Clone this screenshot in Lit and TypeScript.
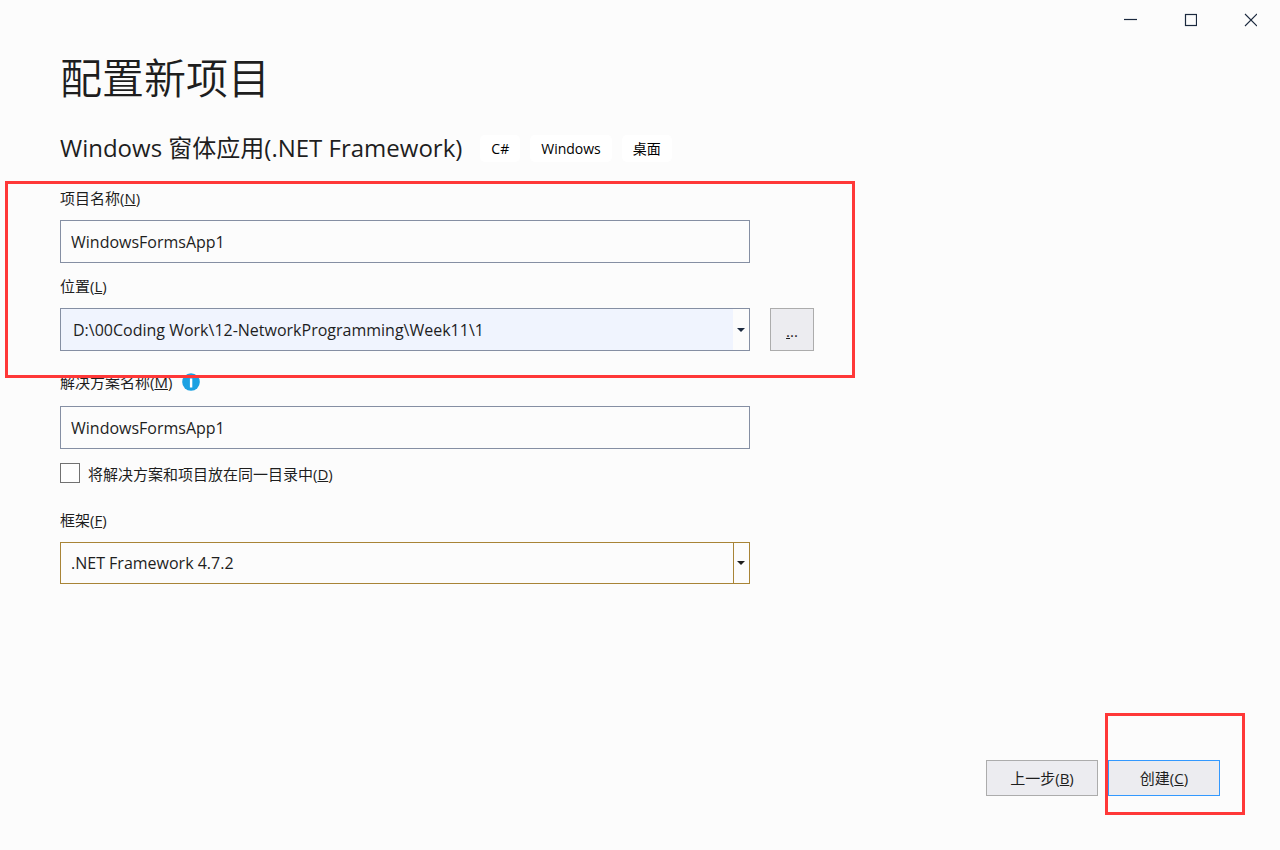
import { LitElement, html, css, svg } from "lit";
import { customElement, state } from "lit/decorators.js";

const caret = svg`<svg class="caret" viewBox="0 0 8 4" width="8" height="4" aria-hidden="true"><path d="M0 0H8L4 4Z" fill="currentColor"/></svg>`;

@customElement("app-root")
export class AppRoot extends LitElement {
  static styles = css`
    :host {
      display: flex;
      flex-direction: column;
      box-sizing: border-box;
      min-height: 100vh;
      background: #fcfcfc;
      color: #1e1e1e;
      font-family: "Open Sans", "Noto Sans CJK SC", sans-serif;
      font-size: 15px;
      line-height: 20px;
    }
    *, *::before, *::after { box-sizing: border-box; }
    button, input, select { font: inherit; color: inherit; margin: 0; border-radius: 0; }
    .titlebar { display: flex; justify-content: flex-end; height: 40px; }
    .caption {
      display: grid;
      place-items: center;
      width: 60px;
      padding: 0;
      border: 0;
      background: none;
      color: #1b293e;
    }
    .titlebar svg { display: block; }
    .content { padding: 8px 60px 0; }
    .title { margin: 0; font-size: 42px; line-height: 60px; font-weight: 350; }
    .template { display: flex; align-items: center; gap: 18px; margin-top: 23px; }
    .name { margin: 0; font-size: 24px; line-height: 34px; font-weight: 400; }
    .tags { display: flex; gap: 10px; margin: 0; padding: 0; list-style: none; }
    .tag {
      padding: 4px 11px 3px;
      border-radius: 5px;
      background: #fff;
      font-size: 14px;
      color: #000;
    }
    form { display: flex; flex-direction: column; max-width: 754px; margin-top: 23px; }
    .group { position: relative; display: flex; flex-direction: column; gap: 13px; }
    .field { display: flex; flex-direction: column; gap: 12px; }
    .narrow { margin-right: 64px; }
    .row { display: flex; gap: 20px; }
    .labelline { display: flex; align-items: center; gap: 10px; }
    .text, .path, .select select { font-size: 16px; }
    .text {
      width: 100%;
      height: 43px;
      padding: 0 10px;
      border: 1px solid #858fa3;
      background: #fcfcfc;
      outline: 0;
    }
    .combo { display: flex; flex: 1; height: 43px; border: 1px solid #858fa3; }
    .path { flex: 1; min-width: 0; padding: 0 12px; border: 0; background: #f0f4fe; outline: 0; }
    .drop {
      display: grid;
      place-items: center;
      width: 16px;
      padding: 0;
      border: 0;
      background: #fcfcfc;
      color: #1b293e;
    }
    .btn { border: 1px solid #acacac; background: #ececf0; padding: 0; }
    .browse { width: 44px; height: 43px; padding-top: 3px; }
    .solution { margin-top: 21px; gap: 14px; }
    .check { display: flex; align-items: center; gap: 8px; margin-top: 13px; }
    .check label { padding-top: 2px; }
    .box {
      appearance: none;
      width: 20px;
      height: 20px;
      border: 1px solid #717171;
      background: #fefefe;
    }
    .box:checked { background: #717171; }
    .framework { margin-top: 26px; }
    .select { display: grid; grid-template-columns: 1fr 17px; color: #1e1e1e; }
    .select select {
      grid-area: 1 / 1 / 2 / 3;
      appearance: none;
      height: 42px;
      padding: 0 27px 0 10px;
      border: 1px solid #a88436;
      background: #fcfcfc;
      outline: 0;
    }
    .arrow {
      grid-area: 1 / 2;
      display: grid;
      place-items: center;
      padding-right: 2px;
      border-left: 1px solid #a88436;
      pointer-events: none;
    }
    .actions {
      display: flex;
      justify-content: flex-end;
      gap: 10px;
      margin-top: auto;
      padding: 40px 60px 54px;
    }
    .action { width: 112px; height: 36px; }
    .primary { border-color: #3399ff; }
    .holder { position: relative; display: flex; }
    .mark { position: absolute; z-index: 1; border: 3px solid #ff3838; pointer-events: none; }
    .mark-form { inset: -7px -41px -27px -55px; }
    .mark-create { inset: -47px -25px -19px -3px; }
  `;

  @state() private project = "WindowsFormsApp1";

  render() {
    return html`
      <header class="titlebar">
        <button class="caption" aria-label="最小化"><svg width="14" height="14"><path d="M1 6.5H14" stroke="currentColor" stroke-width="1.2" fill="none"/></svg></button>
        <button class="caption" aria-label="最大化"><svg width="14" height="14"><rect x="2.5" y="1.5" width="11" height="11" stroke="currentColor" stroke-width="1.2" fill="none"/></svg></button>
        <button class="caption" aria-label="关闭"><svg width="14" height="14"><path d="M2 1L14 13M14 1L2 13" stroke="currentColor" stroke-width="1.1" fill="none"/></svg></button>
      </header>
      <main class="content">
        <h1 class="title">配置新项目</h1>
        <div class="template">
          <h2 class="name">Windows 窗体应用(.NET Framework)</h2>
          <ul class="tags">
            ${["C#", "Windows", "桌面"].map((t) => html`<li class="tag">${t}</li>`)}
          </ul>
        </div>
        <form @submit=${(e: Event) => e.preventDefault()}>
          <div class="group">
            <div class="field narrow">
              <label for="project">项目名称(<u>N</u>)</label>
              <input class="text" id="project" .value=${this.project}
                @input=${(e: Event) => (this.project = (e.target as HTMLInputElement).value)} />
            </div>
            <div class="field">
              <label for="location">位置(<u>L</u>)</label>
              <div class="row">
                <div class="combo">
                  <input class="path" id="location" value="D:\\00Coding Work\\12-NetworkProgramming\\Week11\\1" />
                  <button class="drop" type="button" aria-label="位置列表">${caret}</button>
                </div>
                <button class="btn browse" type="button"><u>.</u>..</button>
              </div>
            </div>
            <div class="mark mark-form"></div>
          </div>
          <div class="field solution narrow">
            <div class="labelline">
              <label for="solution">解决方案名称(<u>M</u>)</label>
              <svg width="18" height="18" viewBox="0 0 18 18" aria-hidden="true">
                <circle cx="9" cy="9" r="8.8" fill="#1ba1e2"/>
                <path d="M7.9 3h2.4v2H7.9zM7.9 5.5h2.4v9H7.9z" fill="#fff"/>
              </svg>
            </div>
            <input class="text" id="solution" .value=${this.project} />
          </div>
          <div class="check">
            <input class="box" id="same" type="checkbox" />
            <label for="same">将解决方案和项目放在同一目录中(<u>D</u>)</label>
          </div>
          <div class="field framework narrow">
            <label for="framework">框架(<u>F</u>)</label>
            <div class="select">
              <select id="framework"><option>.NET Framework 4.7.2</option></select>
              <span class="arrow">${caret}</span>
            </div>
          </div>
        </form>
      </main>
      <footer class="actions">
        <button class="btn action">上一步(<u>B</u>)</button>
        <div class="holder">
          <button class="btn action primary">创建(<u>C</u>)</button>
          <div class="mark mark-create"></div>
        </div>
      </footer>
    `;
  }
}
